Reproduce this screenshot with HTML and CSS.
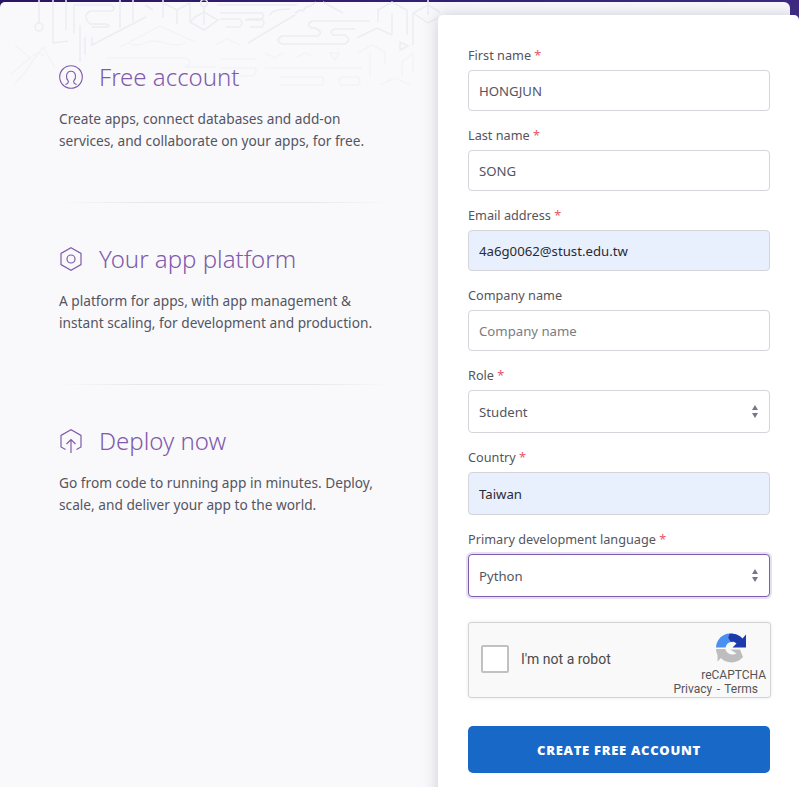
FILE: index.html
```html
<!DOCTYPE html>
<html lang="en">
<head>
<meta charset="utf-8">
<title>Sign up</title>
<link rel="stylesheet" href="styles.css">
</head>
<body>
<div class="stage">
  <div class="panel">
    <svg class="pattern" width="440" height="100" viewBox="0 0 440 100" fill="none">
      <g class="pattern-strong">
        <path d="M39 0V23M53 0V43L68 41M66 0V30M74 5H111Q117 8 112 11H90Q82 16 90 24H106Q112 26 106 27H92M74 5V34M80 25V62M85 37V55M92 37V45L146 17M120 0V28M133 0V22"/>
        <circle cx="39" cy="27" r="4"/>
        <path d="M145 5L153 10M163 0V18M163 3L177 10L190 3V22M177 10V24M204 7V25M195 17L204 12L218 20L204 30L190 22Z"/>
        <circle cx="204" cy="3" r="3.5"/>
        <path d="M217 5H297M220 13H262Q266 17 260 20H245M220 19H240Q244 23 240 27H226M247 19H262Q266 23 262 27H250M270 15Q272 9 290 9M295 13L300 10L303 11L306 7L310 6L316 2M323 2L343 13M248 43L295 15"/>
        <path d="M370 21H312Q305 25 312 28H315Q324 32 318 36H282Q274 40 282 44H345Q352 40 345 35H333Q328 31 335 29H355"/>
        <path d="M378 22V10L392 2L407 10V35M392 13V35M357 38L377 28L392 35M413 45V13L428 5L440 12M413 13L428 23L440 17M428 0V15M400 42L408 46L400 50Z"/>
      </g>
      <g class="pattern-faint">
        <path d="M120 47L160 26L195 42M128 43Q138 47 145 43T165 43T185 43M215 45L227 39L240 45"/>
        <path d="M43 47L25 72L15 84M43 47L55 68M15 45L30 58L38 52L45 56M30 58L10 75M58 72L72 84"/>
        <path d="M106 58H186Q194 62 186 67H215M220 59H257M220 68H255Q258 72 253 76H225M265 68H362M280 77H322Q326 81 322 85H280M341 77H358Q362 81 358 85H341Q337 81 341 77"/>
        <path d="M265 53L275 58L283 53M297 57L305 53L313 57M330 53H339L335 60ZM358 53L372 45L385 52V65M370 53V77M402 77V62L413 53M413 53V72M380 85L395 78L410 85"/>
      </g>
    </svg>
    <aside class="intro">
      <section class="feature">
        <h2 class="feature-title">
          <svg class="feature-icon" viewBox="0 0 24 24" fill="none" stroke="#7f5bab" stroke-width="1.1">
            <circle cx="12" cy="12" r="11.3"/>
            <path d="M6.4 19.6C8.8 18.6 9.8 17.6 9.2 15.8C7.9 14.4 7.3 12.5 7.5 10.6C7.9 7.8 9.8 6.2 12 6.2C14.2 6.2 16.1 7.8 16.5 10.6C16.7 12.5 16.1 14.4 14.8 15.8C14.2 17.6 15.2 18.6 17.6 19.6"/>
          </svg>
          Free account
        </h2>
        <p class="feature-text">Create apps, connect databases and add-on<br>services, and collaborate on your apps, for free.</p>
      </section>
      <hr class="divider">
      <section class="feature">
        <h2 class="feature-title">
          <svg class="feature-icon" viewBox="0 0 24 24" fill="none" stroke="#7f5bab" stroke-width="1.2">
            <path d="M12 .8L22 6.4V17.6L12 23.2L2 17.6V6.4Z"/>
            <circle cx="12" cy="12" r="4"/>
          </svg>
          Your app platform
        </h2>
        <p class="feature-text">A platform for apps, with app management &amp;<br>instant scaling, for development and production.</p>
      </section>
      <hr class="divider">
      <section class="feature">
        <h2 class="feature-title">
          <svg class="feature-icon" viewBox="0 0 24 24" fill="none" stroke="#7f5bab" stroke-width="1.2">
            <path d="M6.5 20.5L2 18V6.4L12 .8L22 6.4V18L17.5 20.5"/>
            <path d="M12 24V10.5M7.5 15L12 10.5L16.5 15"/>
          </svg>
          Deploy now
        </h2>
        <p class="feature-text">Go from code to running app in minutes. Deploy,<br>scale, and deliver your app to the world.</p>
      </section>
    </aside>
    <form class="card">
      <div class="field">
        <label class="label">First name <span class="req">*</span></label>
        <input class="control" type="text" value="HONGJUN">
      </div>
      <div class="field">
        <label class="label">Last name <span class="req">*</span></label>
        <input class="control" type="text" value="SONG">
      </div>
      <div class="field">
        <label class="label">Email address <span class="req">*</span></label>
        <input class="control autofill" type="text" value="4a6g0062@stust.edu.tw">
      </div>
      <div class="field">
        <label class="label">Company name</label>
        <input class="control" type="text" placeholder="Company name">
      </div>
      <div class="field">
        <label class="label">Role <span class="req">*</span></label>
        <div class="control select">Student<span class="updown"></span></div>
      </div>
      <div class="field">
        <label class="label">Country <span class="req">*</span></label>
        <div class="control select autofill">Taiwan</div>
      </div>
      <div class="field">
        <label class="label">Primary development language <span class="req">*</span></label>
        <div class="control select focused">Python<span class="updown"></span></div>
      </div>
      <div class="captcha">
        <span class="captcha-box"></span>
        <span class="captcha-text">I'm not a robot</span>
        <div class="captcha-brand">
          <svg class="captcha-logo" viewBox="0 0 30 30">
            <path fill="#4a90f0" d="M0 14.500C.4 6.500 6.500 .8 13.500 .5L12 4.500L17.500 9.500C13.500 8 10.500 10.500 9.500 14.500Z"/>
            <path fill="#1c3aa9" d="M13.500 .5C19.500 .2 24 2.500 26.500 5.500L30 1.500V14.500H16.500L20.500 10.500C18.500 8.500 16.500 8.500 15 9L12 4.500Z"/>
            <path fill="#bdbdbd" d="M0 16H9.500C10 21 17 23 20.500 20.500L14 16.500H24L27 24C22 31 10 31 5 25L1.500 28.500V22Q0 19 0 16Z"/>
          </svg>
          <span class="captcha-name">reCAPTCHA</span>
          <span class="captcha-links">Privacy - Terms</span>
        </div>
      </div>
      <button class="submit" type="button">CREATE FREE ACCOUNT</button>
    </form>
  </div>
</div>
</body>
</html>
```

FILE: styles.css
```css
* { box-sizing: border-box; }
html, body { margin: 0; height: 100%; overflow: hidden; }
body {
  background: #fff;
  font-family: "Noto Sans", "Liberation Sans", sans-serif;
  color: #596981;
}
.stage {
  width: 799px;
  height: 787px;
  padding-top: 2px;
  overflow: hidden;
  background: linear-gradient(90deg, #2a1660, #3e2a82);
}
.panel {
  position: relative;
  display: flex;
  width: 790px;
  height: 785px;
  background: #f9f9fc;
  border-radius: 5px 6px 0 0;
}
.pattern { position: absolute; left: 0; top: -2px; }
.pattern-strong { stroke: #ecedf3; stroke-width: 1.5; }
.pattern-faint { stroke: #f2f2f7; stroke-width: 1.3; }
.intro {
  position: relative;
  width: 438px;
  flex: none;
  padding: 57px 47px 0 59px;
}
.feature-title {
  margin: 0 0 13px;
  display: flex;
  align-items: center;
  gap: 16px;
  font: 300 24px/36px "Noto Sans", sans-serif;
  color: #7f5bab;
}
.feature-icon { width: 24px; height: 24px; flex: none; }
.feature-text {
  margin: 0;
  font: 400 13.7px/22px "Noto Sans", sans-serif;
  white-space: nowrap;
  color: #55555f;
}
.divider {
  margin: 50px 0 38px 0;
  height: 1px;
  border: 0;
  background: linear-gradient(90deg, transparent, #e6e6ec 25%, #e6e6ec 75%, transparent);
}
.card {
  position: relative;
  flex: none;
  width: 361px;
  height: 800px;
  margin: 13px -9px 0 0;
  background: #fff;
  border-radius: 5px 5px 0 0;
  padding: 31px 29px 0 30px;
  box-shadow: 0 0 16px rgba(70, 70, 110, .25);
}
.field { margin-bottom: 15px; }
.label {
  display: block;
  height: 24px;
  font-size: 12.7px;
  line-height: 18px;
  color: #55555e;
}
.req { color: #e8556a; }
.control {
  display: flex;
  align-items: center;
  justify-content: space-between;
  width: 302px;
  height: 41px;
  padding: 0 10px;
  border: 1px solid #d4d4da;
  border-radius: 4px;
  background: #fff;
  font: 400 13.2px "Noto Sans", sans-serif;
  color: #55555f;
  outline: 0;
}
.control::placeholder { color: #7b7b85; opacity: 1; }
.autofill { background: #e8f0fe; color: #2a2a33; }
.select { height: 43px; }
.focused {
  border-color: #7f5bab;
  box-shadow: 0 0 0 2px #e7e0f3;
}
.updown {
  position: relative;
  width: 7px;
  height: 13px;
}
.updown::before, .updown::after {
  content: "";
  position: absolute;
  left: 0;
  border-left: 3.5px solid transparent;
  border-right: 3.5px solid transparent;
}
.updown::before { top: 0; border-bottom: 5px solid #77778a; }
.updown::after { bottom: 0; border-top: 5px solid #77778a; }
.captcha {
  display: flex;
  align-items: center;
  position: relative;
  width: 303px;
  height: 76px;
  margin-top: 25px;
  background: #f9f9f9;
  border: 1px solid #d3d3d3;
  border-radius: 3px;
  box-shadow: 0 0 4px rgba(0, 0, 0, .08);
  font-family: "Roboto", sans-serif;
}
.captcha-box {
  width: 28px;
  height: 28px;
  margin: 0 0 2px 12px;
  background: #fff;
  border: 2px solid #c1c1c1;
  border-radius: 2px;
}
.captcha-text { margin: 0 0 2px 12px; font-size: 14px; color: #4a4a4a; }
.captcha-brand {
  position: absolute;
  right: 4px;
  top: 10px;
  display: flex;
  flex-direction: column;
  align-items: flex-end;
}
.captcha-logo { width: 30px; height: 30px; margin-right: 20px; }
.captcha-name { font-size: 12px; line-height: 14px; margin-top: 5px; color: #555; }
.captcha-links { font-size: 12px; line-height: 14px; color: #555; margin-right: 8px; word-spacing: 1.5px; }
.submit {
  display: block;
  width: 302px;
  height: 47px;
  margin-top: 28px;
  border: 0;
  border-radius: 5px;
  background: #1868c8;
  color: #fff;
  font: 800 13px "Open Sans", sans-serif;
  letter-spacing: .7px;
}
```
